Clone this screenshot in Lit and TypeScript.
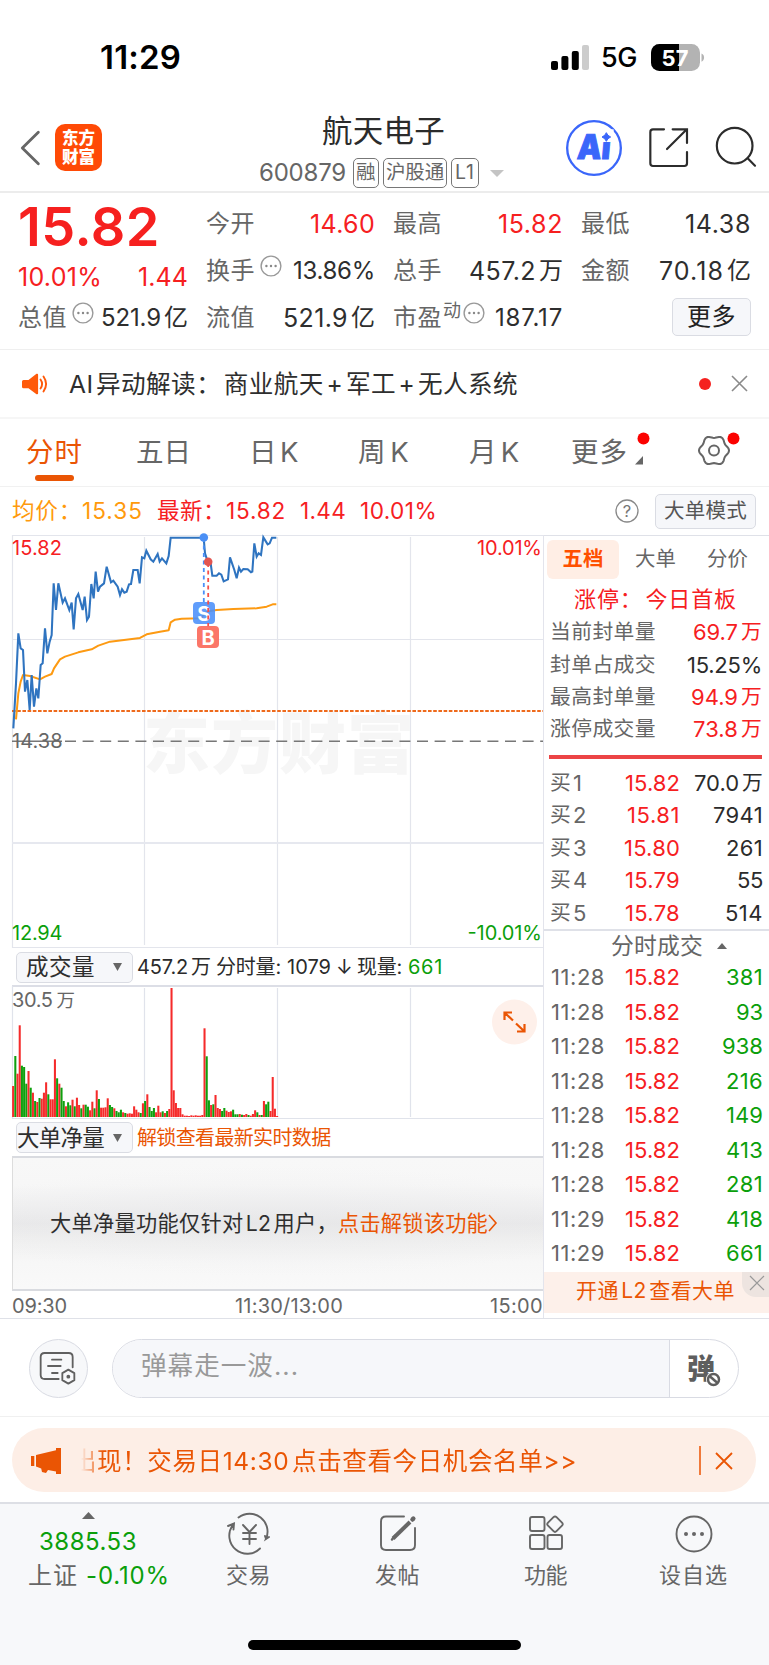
import { LitElement, html, css, svg } from "lit";
import { customElement, property } from "lit/decorators.js";

/** One line of text whose tracking is adjusted so that it fills `w` pixels. */
@customElement("fit-text")
class FitText extends LitElement {
  static styles = css`
    :host { display: inline-block; white-space: pre; flex: none; }
    .in { display: inline-block; }
  `;
  @property({ type: Number }) w = 0;
  @property() text = "";
  render() {
    return html`<span class="in">${this.text}</span>`;
  }
  updated() {
    const el = this.renderRoot.querySelector(".in") as HTMLElement;
    el.style.letterSpacing = "0px";
    if (!this.w) return;
    const n = Array.from(this.text).length;
    const gap = (this.w - el.getBoundingClientRect().width) / n;
    el.style.letterSpacing = `${gap.toFixed(3)}px`;
  }
}

const f = (text: string, w: number, cls = "") =>
  html`<fit-text class=${cls} .text=${text} .w=${w}></fit-text>`;

const dots = html`<svg class="dots" width="22" height="22" viewBox="0 0 22 22">
  <circle cx="11" cy="11" r="9.9" fill="none" stroke="#999" stroke-width="1.4" />
  <circle cx="6.4" cy="11" r="1.2" fill="#888" /><circle cx="11" cy="11" r="1.2" fill="#888" /><circle cx="15.6" cy="11" r="1.2" fill="#888" />
</svg>`;

/** Closed outline of a soft six-lobed gear. */
const gear = (cx: number, cy: number) => {
  const pts: string[] = [];
  for (let a = 0; a < 360; a += 5) {
    const t = (a * Math.PI) / 180;
    const r = 13.8 + 1.2 * Math.cos(6 * t);
    pts.push(`${(cx + r * Math.cos(t)).toFixed(2)},${(cy + r * Math.sin(t)).toFixed(2)}`);
  }
  return pts.join(" ");
};

const PRICE =
  "40,925 48,790 55,640 62,685 69,690 75,815 82,780 89,870 95,765 102,860 109,805 115,835 122,735 128,730 135,625 142,700 149,665 155,645 161,490 168,570 175,490 188,548 195,535 208,570 215,548 221,628 228,535 235,522 248,570 254,530 261,600 267,590 274,492 281,535 287,455 294,515 300,500 312,490 320,440 333,487 340,482 353,500 360,525 366,508 373,518 380,515 387,493 393,492 400,450 413,450 419,490 426,412 433,415 439,392 452,418 460,425 473,402 479,425 486,415 499,430 506,408 512,353 611,353 615,400 624,428 632,430 637,467 650,467 657,460 664,464 671,484 684,478 690,412 703,450 710,475 717,443 723,455 730,447 743,448 753,457 757,455 763,370 770,410 776,400 783,405 790,352 803,373 809,370 816,353 829,353";
const AVERAGE =
  "48,898 55,820 62,785 69,765 90,768 120,778 135,770 155,762 162,745 180,718 195,710 235,697 275,688 295,677 330,665 390,658 420,654 440,643 480,635 506,631 512,607 525,599 545,596 605,595 612,580 625,574 650,570 700,567 770,565 800,560 818,553 829,553";
const VOLUME =
  "r93 g183 r130 r275 g154 g150 g100 r138 g88 r73 g48 r45 g57 r55 r73 r104 g68 r53 r53 r173 g116 r100 g88 g48 r32 g44 g35 r52 g32 r58 r36 g26 r37 g37 g31 r20 r46 g26 r80 g54 r28 r28 r29 r56 g36 g30 r26 g18 g14 g22 r14 g12 r10 r11 r10 r32 r22 r14 g12 r41 g48 r68 g30 g18 g27 r14 r34 r14 g17 r12 g18 r24 r387 r80 r42 r27 r27 r8 r4 r4 r3 r5 r4 r5 r4 r4 r6 r266 g182 g50 r36 g38 r66 r27 r24 g18 g27 r19 r15 r17 g22 g8 g8 r9 g7 r6 r9 g6 r4 r9 r20 g14 r6 g6 r48 g38 g46 r18 r120 r25 r3".split(" ");

const LIMIT: [string, string, number, string][] = [
  ["当前封单量", "69.7", 45, "red"],
  ["封单占成交", "15.25%", 75, "ink"],
  ["最高封单量", "94.9", 47, "red"],
  ["涨停成交量", "73.8", 45, "red"],
];
const BIDS: [string, string, number, string, number][] = [
  ["1", "15.82", 55, "70.0", 45],
  ["2", "15.81", 53, "7941", 50],
  ["3", "15.80", 56, "261", 37],
  ["4", "15.79", 55, "55", 26],
  ["5", "15.78", 55, "514", 38],
];
const DEALS: [string, string, number][] = [
  ["11:28", "381", 37], ["11:28", "93", 27], ["11:28", "938", 41], ["11:28", "216", 37], ["11:28", "149", 37],
  ["11:28", "413", 37], ["11:28", "281", 37], ["11:29", "418", 37], ["11:29", "661", 37],
];

@customElement("app-root")
class AppRoot extends LitElement {
  static styles = css`
    :host { display: block; width: 769px; height: 1665px; overflow: hidden; background: #fff; color: #2e2e2e;
      font-family: Inter, "Noto Sans CJK SC", sans-serif; font-size: 24px; line-height: 30px; }
    * { box-sizing: border-box; }
    svg { display: block; flex: none; overflow: visible; }
    .row { display: flex; align-items: center; }
    .red { color: #f6201f; } .ink { color: #2b2b2b; } .grey { color: #666; } .green { color: #0b9f0b; } .orange { color: #ea5504; }

    .status { height: 100px; padding: 14px 65px 0 100px; color: #000; }
    .status .time { font-size: 33px; font-weight: 600; margin-right: 370px; }
    .status .net { font-size: 27px; font-weight: 500; margin: 2px 14px 0 12px; }

    .header { height: 93px; border-bottom: 2px solid #ececec; display: grid; grid-template-columns: 21px 34px 190px 309px 82px 67px 1fr; }
    .header > * { align-self: start; }
    .back { margin: 31px 0 0; }
    .logo { width: 47px; height: 47px; margin-top: 24px; border-radius: 10px; background: #ff4a06; color: #fff; font-weight: 900; font-size: 16.5px; line-height: 19px; padding-top: 5px; text-align: center; }
    .name { font-size: 30.5px; line-height: 36px; padding: 13px 0 0 77px; color: #2b2b2b; }
    .code { gap: 4px; padding-left: 14px; margin-top: 8px; color: #666; height: 31px; }
    .code .num { margin-right: 3px; }
    .tag { border: 1.5px solid #777; border-radius: 5px; height: 30px; font-size: 19.5px; line-height: 27px; display: flex; justify-content: center; }
    .t1 { width: 26px; } .t3 { width: 64px; } .t2 { width: 28px; }

    .quote { height: 157px; border-bottom: 1px solid #efefef; padding: 0 18px 0 18px; display: grid; grid-template-columns: 170px 169px 170px 170px; column-gap: 18px; }
    .col { display: grid; grid-template-rows: 60px 34px 61px; }
    .cell { display: flex; justify-content: space-between; align-items: center; height: 30px; font-size: 25px; }
    .cell .lab { font-size: 24px; color: #666; }
    .first .cell:nth-child(1) { margin-top: 19px; }
    .first .cell:nth-child(2) { margin-top: 9px; }
    .first .cell:nth-child(3) { margin-top: 16px; }
    .rest .cell:nth-child(1) { margin-top: 16px; }
    .rest .cell:nth-child(2) { margin-top: 3px; }
    .rest .cell:nth-child(3) { margin-top: 16px; }
    .big { font-size: 54px; font-weight: 600; }
    .small { font-size: 24px; }
    .unit { display: flex; gap: 3px; }
    .unit .cn { font-size: 24px; }
    .dots { margin: -11px auto 0 5px; }
    .lift { margin-bottom: 14px; font-size: 18px; color: #666; margin-left: 1px; }
    .lift + .dots { margin-left: 2px; }
    .btn { background: #f6f7fa; border: 1.5px solid #dadce3; border-radius: 5px; display: flex; align-items: center; justify-content: center; }
    .btn.more { width: 79px; height: 38px; margin: -2px 0 0 auto; font-size: 24px; color: #222; }

    .news { height: 69px; border-bottom: 2px solid #f6f6f6; padding: 0 22px; }
    .news .msg { margin-left: 21px; font-size: 24.6px; margin-right: auto; }
    .dot { width: 12px; height: 12px; border-radius: 50%; background: #f5211f; margin-right: 21px; }

    .tabs { height: 68px; border-bottom: 1px solid #f1f1f1; display: grid; grid-template-columns: 110px 113px 109px 111px 102px 126px 60px; padding-left: 26px; font-size: 27.5px; color: #666; line-height: 34px; }
    .tab { padding-top: 16px; display: flex; }
    .tab.on { flex-direction: column; color: #ea5504; }
    .bar { width: 39px; height: 6px; border-radius: 3px; background: #ea5504; margin: 6px 0 0 9px; }

    .avg { height: 48px; padding: 0 13px 0 12px; font-size: 22.6px; }
    .s14 { margin-right: 14px; }
    .amber { color: #ff9a0c; }
    .help { margin: 0 16px 0 auto; }
    .btn.mode { width: 101px; height: 35px; font-size: 20.5px; color: #555; }

    .body { display: grid; grid-template-columns: 544px 225px; height: 784px; border-bottom: 1px solid #dfe1e8; }
    .left { padding-left: 12px; border-right: 1px solid #e3e4ec; }
    .left text { font-family: Inter, "Noto Sans CJK SC", sans-serif; font-size: 20px; }
    .vh { height: 38px; padding-left: 4px; font-size: 20px; gap: 4px; }
    .vh.low { height: 37px; }
    .vh .btn { width: 117px; height: 31px; font-size: 22.5px; justify-content: flex-start; }
    .tri { margin-left: auto; margin-right: 10px; }
    .lock { height: 135px; border-top: 2px solid #d9dbe0; border-bottom: 2px solid #d9dbe0; border-left: 1px solid #ddd; padding-left: 37px; padding-bottom: 1px; font-size: 21.2px;
      background: radial-gradient(ellipse 65% 42% at 50% 48%, rgba(228,228,230,.35), transparent), linear-gradient(#f8f8f8 0, #f7f7f7 20%, #efeff0 38%, #e9e9ea 50%, #f0f0f0 63%, #f7f7f7 80%, #f9f9f9 100%); }
    .axis { height: 26px; line-height: 30px; font-size: 20px; color: #666; display: grid; grid-template-columns: 223px 255px 53px; }

    .right { display: flex; flex-direction: column; border-top: 1px solid #dfe1e8; }
    .rt { height: 47px; padding: 3px 0 4px 3px; font-size: 20.4px; color: #666; }
    .chip { width: 72px; height: 39px; border-radius: 6px; background: #ffeee5; color: #ff5000; font-weight: 600; display: flex; align-items: center; justify-content: center; margin-right: 16px; }
    .rt .gap { margin-right: 31px; }
    .limit { height: 32px; padding-left: 30px; font-size: 22px; }
    .li { height: 32.4px; justify-content: space-between; padding: 0 7px 0 6px; font-size: 22px; }
    .li:nth-child(3) { margin-top: 1px; }
    .li .k, .bid .k { font-size: 20.8px; }
    .li .k { color: #666; }
    .w { display: flex; gap: 3px; }
    .w .cn { font-size: 20.8px; }
    .redbar { height: 4px; background: #ec4445; margin: 9px 7px 8px 5px; }
    .bid { height: 32.5px; display: grid; grid-template-columns: 23px 43px 64px 83px; padding-left: 6px; align-items: center; font-size: 22px; }
    .end { justify-self: end; }
    .dh { height: 31px; padding-left: 67px; border-top: 2px solid #dfe1e8; font-size: 22.8px; color: #666; gap: 14px; }
    .deal { height: 34.5px; display: grid; grid-template-columns: 74px 56px 82px; padding-left: 7px; align-items: center; font-size: 22px; }
    .promo { height: 41px; background: #fdf0ea; padding-left: 32px; font-size: 21px; margin-top: auto; margin-bottom: 5px; color: #ea5504; justify-content: space-between; }
    .promo fit-text { margin-bottom: 4px; }
    .shut { width: 27px; height: 25px; background: #ede4e0; border-bottom-left-radius: 14px; align-self: flex-start; padding: 4px 0 0 8px; }

    .comment { height: 98px; border-bottom: 1px solid #f0f0f0; padding: 1px 0 0 29px; }
    .round { width: 59px; height: 59px; border-radius: 50%; background: #f7f8fa; border: 1px solid #d9dbe3; display: grid; place-items: center; margin-right: 24px; }
    .field { width: 627px; height: 59px; border-radius: 30px; border: 1px solid #d9dbe3; overflow: hidden; display: flex; }
    .ph { width: 557px; background: #f6f7fa; border-right: 1px solid #d9dbe3; color: #999; font-size: 25.6px; padding: 11px 0 0 28px; }
    .dan { padding: 14px 0 0 17px; font-size: 28px; font-weight: 900; color: #5e5e5e; display: flex; }
    .ban { margin: 18px 0 0 -9px; }

    .banner { margin: 11px 13px 10px 12px; height: 64px; border-radius: 32px; background: #fdeee6; color: #ea5504; padding: 1px 24px 0 19px; font-size: 24.5px; }
    .marq { display: flex; justify-content: flex-end; width: 496px; overflow: hidden; margin-left: 19px; margin-right: auto; -webkit-mask-image: linear-gradient(90deg, transparent 0, #000 22px); }
    .vline { width: 2px; height: 29px; background: #f0793a; margin-right: 15px; }

    .nav { height: 163px; border-top: 2px solid #dddfe5; background: #f7f8fa; display: grid; grid-template-columns: 174px 149px 149px 147px 149px; position: relative; color: #666; }
    .idx { display: flex; flex-direction: column; padding: 8px 0 0 28px; }
    .idx svg { margin-left: 54px; }
    .idx .v { margin: 8px 0 4px 11px; }
    .idx .row { gap: 8px; }
    .item { display: flex; flex-direction: column; align-items: center; font-size: 22px; padding-top: 10px; gap: 6px; }
    .home { position: absolute; left: 248px; top: 136px; width: 273px; height: 10px; border-radius: 5px; background: #000; }
  `;

  render() {
    const unit = (n: string, w: number, u: string) =>
      html`<span class="unit">${f(n, w)}${f(u, 24, "cn")}</span>`;
    return html`
      <div class="row status">
        ${f("11:29", 81, "time")}
        <svg width="38" height="25" viewBox="0 0 38 25"><rect x="0" y="16" width="7" height="9" rx="2" /><rect x="10.4" y="11" width="7" height="14" rx="2" /><rect x="20.8" y="6" width="7" height="19" rx="2" /><rect x="31" y="0" width="7" height="25" rx="2" fill="#ccc" /></svg>
        ${f("5G", 36, "net")}
        <svg width="54" height="27" viewBox="0 0 54 27">
          <defs><clipPath id="bat"><rect width="49" height="27" rx="8.5" /></clipPath></defs>
          <g clip-path="url(#bat)"><rect width="49" height="27" fill="#b3b3b3" /><rect width="28" height="27" /></g>
          <path d="M50.5 9.5c3.4 1.2 3.4 7 0 8.2z" fill="#b3b3b3" />
          <text x="10.5" y="21.5" font-family="Inter" font-size="22" font-weight="700" fill="#fff" textLength="27">57</text>
        </svg>
      </div>

      <div class="header">
        <span></span>
        <svg class="back" width="19" height="34" viewBox="63 333 57 102"><path d="M115 337 67 384 115 431" fill="none" stroke="#666" stroke-width="8.5" stroke-linecap="round" stroke-linejoin="round" /></svg>
        <div class="logo">东方<br />财富</div>
        <div>
          <div class="name">${f("航天电子", 123)}</div>
          <div class="row code">
            ${f("600879", 87, "num")}
            <span class="tag t1">${f("融", 20)}</span>
            <span class="tag t3">${f("沪股通", 58)}</span>
            <span class="tag t2">${f("L1", 20)}</span>
            <svg width="22" height="8" viewBox="-8 0 22 8"><path d="M-1 1h14l-7 7z" fill="#c4c4c4" /></svg>
          </div>
        </div>
        <svg style="margin:20px 0 0 12px" width="56" height="56" viewBox="591 300 168 168">
          <circle cx="675" cy="384" r="80.500" fill="none" stroke="#3a66fa" stroke-width="7" />
          <text x="622" y="417" font-family="Inter" font-size="102" font-weight="900" fill="#3a66fa" stroke="#3a66fa" stroke-width="3" textLength="100" lengthAdjust="spacingAndGlyphs" transform="translate(37 0) skewX(-5)">Ai</text>
          <rect x="690" y="328" width="44" height="38" fill="#fff" />
          <path d="M712 338q3.500 9.500 13 13-9.500 3.500-13 13-3.500-9.500-13-13 9.500-3.500 13-13z" fill="#3a66fa" stroke="#3a66fa" stroke-width="3" />
        </svg>
        <svg style="margin:27px 0 0 12px" width="42" height="42" viewBox="836 322 126 126" fill="none" stroke="#2c2c2c" stroke-width="6.500" stroke-linecap="round">
          <path d="M884 329h-33q-8 0-8 8v94q0 8 8 8h94q8 0 8-8v-34M910 329h43v41M893 388l58-58" />
        </svg>
        <svg style="margin:27px 0 0 12px" width="42" height="42" viewBox="1038 322 126 126" fill="none" stroke="#2c2c2c" stroke-width="6.500" stroke-linecap="round">
          <circle cx="1097" cy="378" r="53.500" /><path d="M1136 416l22 22" />
        </svg>
      </div>

      <div class="quote">
        <div class="col first">
          <div class="cell red">${f("15.82", 142, "big")}</div>
          <div class="cell red">${f("10.01%", 84)}${f("1.44", 50)}</div>
          <div class="cell">${f("总值", 49, "lab")}${dots}<span class="unit small">${f("521.9", 60)}${f("亿", 24, "cn")}</span></div>
        </div>
        <div class="col rest">
          <div class="cell">${f("今开", 49, "lab")}${f("14.60", 65, "red")}</div>
          <div class="cell">${f("换手", 49, "lab")}${dots}${f("13.86%", 82, "small")}</div>
          <div class="cell">${f("流值", 49, "lab")}${unit("521.9", 65, "亿")}</div>
        </div>
        <div class="col rest">
          <div class="cell">${f("最高", 49, "lab")}${f("15.82", 65, "red")}</div>
          <div class="cell">${f("总手", 49, "lab")}${unit("457.2", 67, "万")}</div>
          <div class="cell">${f("市盈", 49, "lab")}${f("动", 18, "lift")}${dots}${f("187.17", 68, "small")}</div>
        </div>
        <div class="col rest">
          <div class="cell">${f("最低", 49, "lab")}${f("14.38", 66)}</div>
          <div class="cell">${f("金额", 49, "lab")}${unit("70.18", 65, "亿")}</div>
          <div class="cell"><div class="btn more">${f("更多", 49)}</div></div>
        </div>
      </div>

      <div class="row news">
        <svg width="26" height="22" viewBox="0 0 26 22"><path d="M1.500 7h5l8-6.200q1.600-.6 1.600 1v18.400q0 1.600-1.600 1l-8-6h-5q-1.500 0-1.500-1.500v-5.200q0-1.500 1.500-1.500z" fill="#ff5a0a" /><path d="M18.500 6.500q3.200 4.500 0 9M21.500 3.500q5.200 7.500 0 15" fill="none" stroke="#ff5a0a" stroke-width="1.900" stroke-linecap="round" /></svg>
        ${f("AI\u200a异动解读：\u200a商业航天\u200a+\u200a军工\u200a+\u200a无人系统", 449, "msg")}
        <div class="dot"></div>
        <svg width="15" height="15" viewBox="0 0 15 15"><path d="M0 0 15 15M15 0 0 15" stroke="#8a8a8a" stroke-width="1.600" /></svg>
      </div>

      <div class="tabs">
        <div class="tab on">${f("分时", 57)}<div class="bar"></div></div>
        <div class="tab">${f("五日", 55)}</div>
        <div class="tab">${f("日\u200aK", 50)}</div>
        <div class="tab">${f("周\u200aK", 52)}</div>
        <div class="tab">${f("月\u200aK", 51)}</div>
        <div class="tab">${f("更多", 57)}<svg width="20" height="34" viewBox="0 0 20 34"><circle cx="15.500" cy="3.500" r="6" fill="#fb0200" /><path d="M15 21v8.500H7z" fill="#666" /></svg></div>
        <div class="tab"><svg width="44" height="34" viewBox="0 0 44 34">
          <polygon points=${gear(17, 15.5)} fill="none" stroke="#666" stroke-width="2" stroke-linejoin="round" />
          <circle cx="17" cy="15.500" r="5" fill="none" stroke="#666" stroke-width="2" /><circle cx="36.500" cy="3.500" r="6" fill="#fb0200" /></svg></div>
      </div>

      <div class="row avg">
        ${f("均价：", 70, "amber")}${f("15.35", 61, "amber s14")}${f("最新：", 69, "red")}
        ${f("15.82", 60, "red s14")}${f("1.44", 46, "red s14")}${f("10.01%", 77, "red")}
        <svg class="help" width="24" height="24" viewBox="0 0 24 24"><circle cx="12" cy="12" r="11" fill="none" stroke="#888" stroke-width="1.300" /><text x="12" y="18" text-anchor="middle" font-family="Inter" font-size="16.500" fill="#777">?</text></svg>
        <div class="btn mode">${f("大单模式", 83)}</div>
      </div>

      <div class="body">
        <div class="left">
          <svg width="531" height="413" viewBox="12 535 531 413">
            <text x="143" y="768" textLength="271" style="font-size:67px;font-weight:900" fill="#f6f6f6">东方财富</text>
            <path d="M12.500 948V535.500H543M144.500 537V945M277.500 537V945M410.500 537V945M12 639.500H543M12 947.500H543" fill="none" stroke="#e3e5ec" stroke-width="1.200" />
            <path d="M12 843H543" stroke="#e6e8ef" stroke-width="2" />
            <path d="M12 711H543" stroke="#ee6a1c" stroke-width="2" stroke-dasharray="3.600 1.600" />
            <path d="M65 741.300H543" stroke="#777" stroke-width="1.500" stroke-dasharray="11 6.600" />
            <path d="M12 741.300H62" stroke="#777" stroke-width="1.500" />
            <g transform="translate(0 420) scale(.33333)" fill="none">
              <polyline points=${AVERAGE} stroke="#fd9a12" stroke-width="6" stroke-linejoin="round" />
              <polyline points=${PRICE} stroke="#2f74c0" stroke-width="6.200" />
            </g>
            <path d="M203.800 538V604" stroke="#4a90f8" stroke-width="1.800" stroke-dasharray="4 3.500" />
            <circle cx="203.800" cy="537.500" r="4.300" fill="#4a8ff5" />
            <rect x="193" y="602" width="22" height="22" rx="4" fill="#4a90fb" opacity=".88" />
            <text x="203.800" y="620.500" text-anchor="middle" style="font-weight:700" fill="#fff">S</text>
            <path d="M208.200 563V627" stroke="#f6504a" stroke-width="1.800" stroke-dasharray="4 3.500" />
            <circle cx="208.200" cy="561.700" r="4.300" fill="#e25550" />
            <rect x="197" y="626" width="22" height="22" rx="4" fill="#fb6f60" opacity=".95" />
            <text x="208" y="644.500" text-anchor="middle" style="font-weight:700" fill="#fff">B</text>
            <text x="12" y="555" textLength="50" fill="#f6201f">15.82</text>
            <text x="477" y="555" textLength="65" fill="#f6201f">10.01%</text>
            <text x="12" y="748" textLength="50.500" fill="#666">14.38</text>
            <text x="12" y="940" textLength="50.500" fill="#0b9f0b">12.94</text>
            <text x="467.500" y="940" textLength="74.500" fill="#0b9f0b">-10.01%</text>
          </svg>
          <div class="row vh">
            <div class="btn"><span style="width:9px"></span>${f("成交量", 69)}<svg class="tri" width="9" height="8"><path d="M0 0h9l-4.500 8z" fill="#666" /></svg></div>
            <span class="row ink">${f("457.2", 51)}<span style="width:3px"></span>${f("万", 21)}<span style="width:4px"></span>${f("分时量:", 65)}<span style="width:6px"></span>${f("1079", 44)}<span style="width:5px"></span>${f("↓", 16)}<span style="width:5px"></span>${f("现量:", 45)}<span style="width:6px"></span>${f("661", 35, "green")}</span>
          </div>
          <svg width="531" height="133" viewBox="12 986 531 133">
            <path d="M12 986H543" stroke="#dcdee6" stroke-width="2" />
            <path d="M12.500 986V1119M144.500 988V1117M277.500 988V1117M410.500 988V1117M12 1118.500H543" stroke="#e0e3eb" stroke-width="1.200" />
            ${VOLUME.map((v, i) => {
              const h = Number(v.slice(1)) / 3;
              return svg`<rect x=${(12.1 + i * 2.2).toFixed(2)} y=${(1117 - h).toFixed(1)} width="2.05" height=${h.toFixed(1)} fill=${v[0] === "r" ? "#f52b2b" : "#0ea00e"} />`;
            })}
            <text x="12" y="1007" textLength="41" fill="#666">30.5</text><text x="56.500" y="1007" style="font-size:18.500px" fill="#666">万</text>
            <circle cx="514.500" cy="1022" r="22.500" fill="#fef0ea" />
            <path d="M504.500 1020V1012.500H512M505 1013l8 7.500M524.500 1024V1031.500H517M524 1031l-8-7.500" fill="none" stroke="#ea5504" stroke-width="2.200" />
          </svg>
          <div class="row vh low">
            <div class="btn">${f("大单净量", 87)}<svg class="tri" width="9" height="8"><path d="M0 0h9l-4.500 8z" fill="#666" /></svg></div>
            ${f("解锁查看最新实时数据", 193.5, "orange")}
          </div>
          <div class="row lock">${f("大单净量功能仅针对\u200aL2\u200a用户，", 288)}${f("点击解锁该功能", 150, "orange")}<svg width="9" height="18" viewBox="0 0 9 18"><path d="M1 1 8 9 1 17" fill="none" stroke="#ea5504" stroke-width="1.600" /></svg></div>
          <div class="axis">${f("09:30", 55)}${f("11:30/13:00", 108)}${f("15:00", 53)}</div>
        </div>

        <div class="right">
          <div class="row rt"><div class="chip">${f("五档", 41)}</div>${f("大单", 41, "gap")}${f("分价", 41)}</div>
          <div class="row limit red">${f("涨停：\u200a今日首板", 163)}</div>
          ${LIMIT.map(([k, v, w, c]) => html`<div class="row li">${f(k, 106, "k")}<span class="w ${c}">${f(v, w)}${v.includes("%") ? "" : f("万", 21, "cn")}</span></div>`)}
          <div class="redbar"></div>
          ${BIDS.map(([n, p, pw, v, vw]) => html`<div class="bid grey">${f("买", 21, "k")}${f(n, 0)}${f(p, pw, "red end")}<span class="w ink end">${f(v, vw)}${v === "70.0" ? f("万", 21, "cn") : ""}</span></div>`)}
          <div class="row dh">${f("分时成交", 92)}<svg width="10" height="6"><path d="M0 6h10l-5-6z" fill="#666" /></svg></div>
          ${DEALS.map(([t, v, w]) => html`<div class="deal grey">${f(t, 54)}${f("15.82", 55, "red")}${f(v, w, "green end")}</div>`)}
          <div class="row promo">${f("开通\u200aL2\u200a查看大单", 159)}<div class="shut"><svg width="14" height="14"><path d="M0 0 14 14M14 0 0 14" stroke="#999" stroke-width="1.200" /></svg></div></div>
        </div>
      </div>

      <div class="row comment">
        <div class="round"><svg width="37" height="33" viewBox="126 158 111 99" fill="none" stroke="#606060" stroke-width="5.500">
          <path d="M224 204V173q0-12-12-12H140q-12 0-12 12v54q0 12 12 12h42M162 181h28M150 200h38M162 221h17" stroke-linecap="round" />
          <path d="M211 211l18 10.500v21L211 253l-18-10.500v-21z" stroke-linejoin="round" /><circle cx="211" cy="232" r="3" fill="#606060" /></svg></div>
        <div class="field">
          <div class="ph">${f("弹幕走一波...", 158)}</div>
          <div class="dan">弹<svg class="ban" width="15" height="15" viewBox="0 0 15 15"><circle cx="7.500" cy="7.500" r="7.500" fill="#fff" /><circle cx="7.500" cy="7.500" r="5.500" fill="none" stroke="#5e5e5e" stroke-width="2.500" /><path d="M3.500 4l8 7" stroke="#5e5e5e" stroke-width="2.500" /></svg></div>
        </div>
      </div>

      <div class="row banner">
        <svg width="31" height="26" viewBox="0 0 31 26"><path d="M0 8h3.300v10H0zM5 7 25 2.200V0h5v26h-5v-2.500l-8-1.500-2 3-4-1-.800-3.500L5 18.500z" fill="#ea5504" /></svg>
        <div class="marq">${f("出现！交易日14:30\u200a点击查看今日机会名单>>", 505)}</div>
        <div class="vline"></div>
        <svg width="16" height="16"><path d="M0 0 16 16M16 0 0 16" stroke="#ea5504" stroke-width="1.800" /></svg>
      </div>

      <div class="nav">
        <div class="idx">
          <svg width="13" height="7"><path d="M0 7h13L6.500 0z" fill="#666" /></svg>
          <div class="v green">${f("3885.53", 98)}</div>
          <div class="row">${f("上证", 50)}${f("-0.10%", 84, "green")}</div>
        </div>
        <div class="item">
          <svg width="42" height="40" viewBox="0 1 42 40" fill="none" stroke="#666" stroke-width="1.900" stroke-linecap="round"><path d="M10.500 4.500A18 18 0 0 1 38 26l3-2M38 26l-1-3M32 35.500A18 18 0 0 1 4.500 12.500M0 13l6-2.500-.5 6M15 12l6.500 7L28 12M21.500 19v12M15 20h13M15 26h13" /></svg>
          ${f("交易", 45)}
        </div>
        <div class="item">
          <svg width="38" height="40" viewBox="0 0 38 40" fill="none" stroke="#666" stroke-width="1.900" stroke-linecap="round"><path d="M25 2.500H7q-5 0-5 5V31q0 5 5 5h24q5 0 5-5V14" /><path d="M14 24.500 31 8" stroke-width="4" stroke-linecap="butt" /><path d="M13 25.500l3.500-4" stroke-width="2.500" /><path d="M33.500 5.500l.8-.8" stroke-width="4.500" /></svg>
          ${f("发帖", 45)}
        </div>
        <div class="item">
          <svg width="36" height="40" viewBox="0 0 36 40" fill="none" stroke="#666" stroke-width="1.900" stroke-linejoin="round"><rect x="2" y="3" width="14.500" height="14" rx="2" /><rect x="2" y="21" width="14.500" height="14" rx="2" /><rect x="19.500" y="21" width="14.500" height="14" rx="2" /><path d="M25.500 3.200q1.500-1.500 3 0l5.500 5.500q1.500 1.500 0 3l-5.500 5.500q-1.500 1.500-3 0L20 11.700q-1.500-1.500 0-3z" /></svg>
          ${f("功能", 43)}
        </div>
        <div class="item">
          <svg width="38" height="40" viewBox="0 0 38 40"><circle cx="19" cy="20" r="17.500" fill="none" stroke="#666" stroke-width="1.900" /><circle cx="11" cy="20" r="2" fill="#666" /><circle cx="19" cy="20" r="2" fill="#666" /><circle cx="27" cy="20" r="2" fill="#666" /></svg>
          ${f("设自选", 69)}
        </div>
        <div class="home"></div>
      </div>
    `;
  }
}
